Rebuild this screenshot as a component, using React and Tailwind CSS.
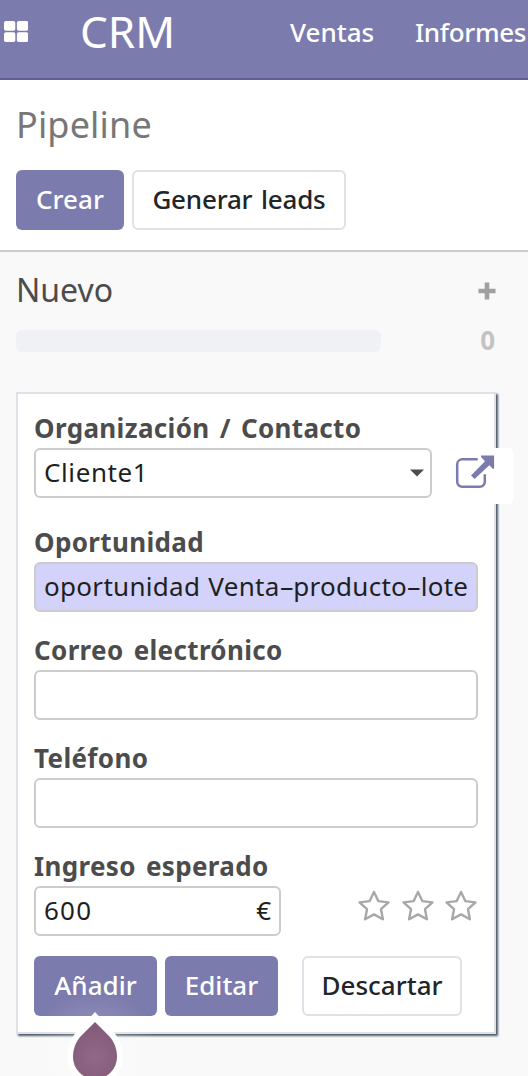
import React from "react";

function Label({ children, className = "" }) {
  return (
    <label className={`flex h-10 items-center whitespace-nowrap text-[26px] leading-10 font-bold tracking-[0.35px] [word-spacing:3px] text-[#4c4c4c] ${className}`}>
      {children}
    </label>
  );
}

function Field({ children, className = "" }) {
  return (
    <div className={`flex h-[50px] items-center overflow-hidden rounded-md border-2 border-[#ccc] px-2 pb-0.5 text-[26px] whitespace-nowrap text-[#1f1f1f] ${className}`}>
      {children}
    </div>
  );
}

function Button({ primary, children, className = "" }) {
  return (
    <button
      className={`flex h-15 items-center justify-center rounded-md pb-0.5 text-[26px] font-medium whitespace-nowrap ${
        primary ? "bg-[#7c7bad] text-white" : "border-2 border-[#dee2e6] bg-white text-[#212529]"
      } ${className}`}
    >
      {children}
    </button>
  );
}

function Hyphen() {
  return <span className="inline-block w-[13.500px] scale-x-[1.8] text-center tracking-normal">-</span>;
}

function AppsIcon() {
  return (
    <svg className="mt-[21px] ml-1 h-[21px] w-6 shrink-0 fill-white" viewBox="0 0 24 21">
      <rect x="0" y="0" width="11.3" height="9.7" rx="1.8" />
      <rect x="12.9" y="0" width="11.3" height="9.7" rx="1.8" />
      <rect x="0" y="11.3" width="11.3" height="9.7" rx="1.8" />
      <rect x="12.9" y="11.3" width="11.3" height="9.7" rx="1.8" />
    </svg>
  );
}

function LinkIcon() {
  return (
    <svg className="h-[34px] w-10" viewBox="0 0 40 34">
      <path d="M22.700 4.300H7.200a5 5 0 0 0-5 5v17.500a5 5 0 0 0 5 5h17.600a5 5 0 0 0 5-5V19.300" fill="none" stroke="#7c7bad" strokeWidth="2.5" />
      <path d="M26 .5H38.500a.6.6 0 0 1 .6.6V13.500L38 14l-3.700-3.700L19.600 24 16 20.400 30 6.200 26 2z" fill="#7c7bad" />
    </svg>
  );
}

function Star() {
  return (
    <svg className="h-[33px] w-[34px]" viewBox="0 0 34 33">
      <path d="M17 3l4.300 9.100 10.200 1.300-7.500 6.800 1.900 10.100L17 25.400l-8.900 4.900L10 20.200l-7.500-6.800 10.200-1.300z" fill="none" stroke="#a8a8a8" strokeWidth="2.4" strokeLinejoin="round" />
    </svg>
  );
}

function Drop() {
  return (
    <svg className="pointer-events-none absolute top-[990px] left-[25px] h-[86px] w-[140px]" viewBox="25 990 140 86">
      <defs>
        <radialGradient id="halo" gradientUnits="userSpaceOnUse" cx="95" cy="1057" r="66">
          <stop offset="0" stopColor="#fff" stopOpacity=".25" />
          <stop offset="1" stopColor="#fff" stopOpacity="0" />
        </radialGradient>
        <radialGradient id="drop" gradientUnits="userSpaceOnUse" cx="95" cy="1057" r="34">
          <stop offset="0" stopColor="#926888" />
          <stop offset="1" stopColor="#815a77" />
        </radialGradient>
      </defs>
      <circle cx="95" cy="1057" r="66" fill="url(#halo)" />
      <path d="M95 1012L80 1028C71 1037 67 1046 67 1057a28 28 0 0 0 56 0C123 1046 119 1037 110 1028z" fill="#fff" />
      <path d="M95 1022L81 1036C75.500 1042 73 1049 73 1057a22 22 0 0 0 44 0C117 1049 114.500 1042 109 1036z" fill="url(#drop)" />
    </svg>
  );
}

export default function App() {
  return (
    <div className="relative flex h-[1076px] w-[528px] flex-col overflow-hidden bg-[#f9f9f9] font-['Noto_Sans',sans-serif]">
      <nav className="flex h-20 shrink-0 border-b-2 border-[#5f5e97] bg-[#7c7bad] font-medium whitespace-nowrap text-white">
        <AppsIcon />
        <span className="ml-[52px] w-[210px] shrink-0 text-[44px] leading-[62px] font-normal">CRM</span>
        <span className="w-[125px] shrink-0 text-[26px] leading-[64px]">Ventas</span>
        <span className="shrink-0 text-[26px] leading-[64px] tracking-[-0.35px]">Informes</span>
      </nav>

      <header className="h-[172px] shrink-0 border-b-2 border-[#ccc] bg-white px-4">
        <h1 className="h-[90px] text-[36px] leading-[90px] tracking-[0.15px] text-[#777]">Pipeline</h1>
        <div className="flex gap-2">
          <Button primary className="w-27">Crear</Button>
          <Button className="w-[214px] tracking-[-0.2px] [word-spacing:2px]">Generar leads</Button>
        </div>
      </header>

      <main className="px-4">
        <div className="flex h-[78px] items-center justify-between pr-4">
          <h2 className="pb-0.5 text-[32px] text-[#4c4c4c]">Nuevo</h2>
          <svg className="h-[18px] w-[18px]" viewBox="0 0 18 18">
            <path d="M9 .5v17M.5 9h17" stroke="#a0a0a0" strokeWidth="4.6" />
          </svg>
        </div>
        <div className="flex h-[22px] items-center justify-between pr-[17px]">
          <div className="h-[22px] w-[365px] rounded-md bg-[#f0f1f4]" />
          <span className="pb-0.5 text-[26px] font-bold text-[#c3c3c3]">0</span>
        </div>

        <section className="mt-10 flex h-[642px] w-[480px] flex-col border-2 border-[#dee2e6] bg-white px-4 shadow-[2px_2px_2px_#4f5b6b]">
          <Label className="mt-[14px]">Organización / Contacto</Label>
          <div className="flex h-[50px]">
            <Field className="w-[398px] shrink-0 justify-between">
              <span className="tracking-[0.6px]">Cliente1</span>
              <svg className="-mr-[2px] mt-0.5 h-2 w-[14px]" viewBox="0 0 14 8"><path d="M0 .5h14L7 7.500z" fill="#4c4c4c" /></svg>
            </Field>
            <button className="ml-1.5 flex h-14 w-[76px] shrink-0 items-start rounded-md bg-white pt-[7px] pl-[17px]">
              <LinkIcon />
            </button>
          </div>
          <Label className="mt-[24px]">Oportunidad</Label>
          <Field className="bg-[#d2d2fa]">
            <span className="w-full overflow-hidden tracking-[0.3px] [word-spacing:1px]">
              oportunidad Venta<Hyphen />producto<Hyphen />lote
            </span>
          </Field>
          <Label className="mt-[18px]">Correo electrónico</Label>
          <Field />
          <Label className="mt-[18px]">Teléfono</Label>
          <Field />
          <Label className="mt-[18px]">Ingreso esperado</Label>
          <div className="flex justify-between">
            <Field className="w-[247px] justify-between">
              <span className="tracking-[1.2px]">600</span>
              <span>€</span>
            </Field>
            <div className="flex gap-[9.500px] pt-[3px]">
              <Star /><Star /><Star />
            </div>
          </div>
          <div className="mt-5 flex">
            <Button primary className="w-[123px]">Añadir</Button>
            <Button primary className="ml-2 w-[113px]">Editar</Button>
            <Button className="ml-6 w-40">Descartar</Button>
          </div>
        </section>
      </main>
      <Drop />
    </div>
  );
}
